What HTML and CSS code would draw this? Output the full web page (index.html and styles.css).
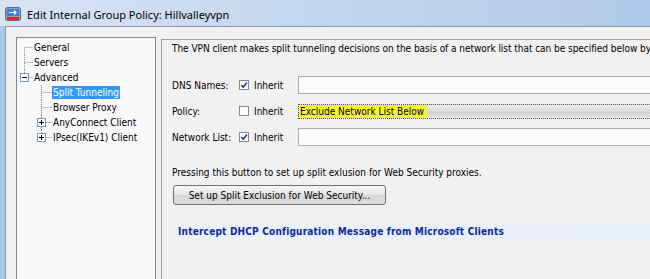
FILE: index.html
```html
<!DOCTYPE html>
<html lang="en">
<head>
  <meta charset="UTF-8" />
  <title>Edit Internal Group Policy: Hillvalleyvpn</title>
  <link rel="stylesheet" href="styles.css">
</head>
<body>

  <div class="window">

    <div class="titlebar">
      <svg class="app-icon" width="16" height="15" viewBox="0 0 16 15">
        <rect x="0.5" y="0.5" width="15" height="13" rx="2" fill="#8fa3bd" stroke="#5b6f8c"/>
        <rect x="2" y="2" width="12" height="7" fill="#3d7fd6"/>
        <path d="M4 5.5h7M9 3.5l2 2-2 2" stroke="#fff" stroke-width="1.2" fill="none"/>
        <rect x="2" y="10" width="12" height="3" fill="#e0262b"/>
      </svg>
      <span class="title">Edit Internal Group Policy: Hillvalleyvpn</span>
    </div>

    <div class="client">

      <div class="tree">
        <div class="node">
          <svg class="gutter g0" viewBox="0 0 16 15"><path d="M7.5 7.5V15M7.5 7.5H16" /></svg>
          <span class="label">General</span>
        </div>
        <div class="node">
          <svg class="gutter g0" viewBox="0 0 16 15"><path d="M7.5 0V15M7.5 7.5H16" /></svg>
          <span class="label">Servers</span>
        </div>
        <div class="node">
          <svg class="gutter g0" viewBox="0 0 16 15">
            <path d="M7.5 0V3M11.5 7.5H16" />
            <rect class="box" x="3.5" y="3.5" width="8" height="8"/>
            <path class="sign" d="M5 7.5h5"/>
          </svg>
          <span class="label">Advanced</span>
        </div>
        <div class="node">
          <svg class="gutter g1" viewBox="0 0 35 15"><path d="M24.5 0V15M24.5 7.5H35" /></svg>
          <span class="label selected">Split Tunneling</span>
        </div>
        <div class="node">
          <svg class="gutter g1" viewBox="0 0 35 15"><path d="M24.5 0V15M24.5 7.5H35" /></svg>
          <span class="label">Browser Proxy</span>
        </div>
        <div class="node">
          <svg class="gutter g1" viewBox="0 0 35 15">
            <path d="M24.5 0V3M24.5 12V15M28.5 7.5H35" />
            <rect class="box" x="20.5" y="3.5" width="8" height="8"/>
            <path class="sign" d="M22 7.5h5M24.5 5v5"/>
          </svg>
          <span class="label">AnyConnect Client</span>
        </div>
        <div class="node">
          <svg class="gutter g1" viewBox="0 0 35 15">
            <path d="M24.5 0V3M28.5 7.5H35" />
            <rect class="box" x="20.5" y="3.5" width="8" height="8"/>
            <path class="sign" d="M22 7.5h5M24.5 5v5"/>
          </svg>
          <span class="label">IPsec(IKEv1) Client</span>
        </div>
      </div>

      <div class="main">
        <p class="intro">The VPN client makes split tunneling decisions on the basis of a network list that can be specified below by</p>

        <div class="form-rows">
          <div class="form-row">
            <span class="field-label">DNS Names:</span>
            <label class="inherit">
              <svg class="check" viewBox="0 0 10 10"><rect x="0.5" y="0.5" width="9" height="9"/><path d="M2.3 5l2 2.2 3.6-4.6"/></svg>
              Inherit
            </label>
            <div class="textbox"></div>
          </div>
          <div class="form-row">
            <span class="field-label">Policy:</span>
            <label class="inherit">
              <svg class="check off" viewBox="0 0 10 10"><rect x="0.5" y="0.5" width="9" height="9"/></svg>
              Inherit
            </label>
            <div class="textbox combo"><span class="hilite">Exclude Network List Below</span></div>
          </div>
          <div class="form-row">
            <span class="field-label">Network List:</span>
            <label class="inherit">
              <svg class="check" viewBox="0 0 10 10"><rect x="0.5" y="0.5" width="9" height="9"/><path d="M2.3 5l2 2.2 3.6-4.6"/></svg>
              Inherit
            </label>
            <div class="textbox"></div>
          </div>
        </div>

        <p class="note">Pressing this button to set up split exlusion for Web Security proxies.</p>
        <button class="btn">Set up Split Exclusion for Web Security...</button>

        <div class="section-head">Intercept DHCP Configuration Message from Microsoft Clients</div>
      </div>

    </div>
  </div>

</body>
</html>
```

FILE: styles.css
```css
:root {
  --frame: #a9c8ea;
  --dialog: #f1f1f2;
  --panel: #f9f9f9;
  --line: #a0a0a0;
  --text: #000;
  --link: #0b2aa6;
}

* {
  box-sizing: border-box;
  margin: 0;
  padding: 0;
}

body {
  width: 650px;
  height: 279px;
  overflow: hidden;
  font-family: "DejaVu Sans Condensed", "DejaVu Sans", sans-serif;
  font-size: 10px;
  color: var(--text);
}

.window {
  display: flex;
  flex-direction: column;
  height: 279px;
  background: var(--frame);
}

.titlebar {
  height: 26px;
  display: flex;
  align-items: center;
  gap: 6px;
  padding: 2px 0 0 5px;
  background: linear-gradient(to right, #d7e5f5, #c3d7ee 45%, #b1cae9);
}

.title {
  font-family: "Noto Sans", sans-serif;
  font-size: 11px;
  color: #000;
}

.client {
  flex: 1;
  display: flex;
  margin-left: 5px;
  padding: 10px 0 0 10px;
  background: var(--dialog);
  border-top: 1px solid #8d9bad;
  border-left: 1px solid #8d9bad;
}

/* tree */

.tree {
  width: 140px;
  background: var(--panel);
  border: 1px solid #828790;
  border-bottom: none;
  padding-top: 2px;
}

.node {
  display: flex;
  align-items: center;
  height: 15px;
}

.gutter {
  height: 15px;
  flex: none;
}
.gutter.g0 { width: 16px; }
.gutter.g1 { width: 35px; }

.gutter path {
  stroke: #8f8f8f;
  stroke-width: 1;
  stroke-dasharray: 1 1;
  fill: none;
}

.gutter .box {
  fill: #fff;
  stroke: #7f9db9;
}

.gutter path.sign {
  stroke: #000;
  stroke-dasharray: none;
}

.label {
  padding: 0 1px;
  line-height: 13px;
  white-space: nowrap;
}

.label.selected {
  background: #3399ff;
  color: #fff;
}

/* right side */

.main {
  flex: 1;
  margin: 2px 0 0 5px;
  padding: 3px 0 0 10px;
  border-top: 1px solid var(--line);
  border-left: 1px solid var(--line);
  overflow: hidden;
}

.intro,
.note {
  white-space: nowrap;
  line-height: 12px;
}

.intro {
  letter-spacing: -0.04px;
}

.form-rows {
  display: flex;
  flex-direction: column;
  gap: 8px;
  margin-top: 21px;
}

.form-row {
  display: flex;
  align-items: center;
  height: 18px;
}

.field-label {
  width: 67px;
  flex: none;
}

.inherit {
  width: 59px;
  flex: none;
  display: flex;
  align-items: center;
  gap: 5px;
}

.check {
  width: 10px;
  height: 10px;
}

.check rect {
  fill: #fff;
  stroke: #8a8a8a;
}

.check path {
  stroke: #2338a8;
  stroke-width: 1.6;
  fill: none;
}

.textbox {
  flex: 1;
  height: 18px;
  margin-right: -10px;
  background: #fbfbfb;
  border: 1px solid #abadb3;
  border-right: none;
}

.textbox.combo {
  height: 15px;
  margin-top: 1px;
  border: 1px dotted #555;
  border-right: none;
  background: linear-gradient(#ececec, #d9d9d9 50%, #cfcfcf 51%, #e4e4e4);
  display: flex;
  align-items: center;
}

.hilite {
  background: #f6f62b;
  padding: 0 3px 0 1px;
  line-height: 13px;
  white-space: nowrap;
}

.note {
  margin-top: 21px;
}

.btn {
  display: block;
  margin: 6px 0 0 1px;
  width: 213px;
  height: 20px;
  font: inherit;
  color: #000;
  background: linear-gradient(#f6f6f6, #e6e6e6 50%, #d8d8d8 51%, #dcdcdc);
  border: 1px solid #707070;
  border-radius: 3px;
}

.section-head {
  margin-top: 19px;
  padding-left: 6px;
  height: 16px;
  line-height: 16px;
  font-weight: bold;
  letter-spacing: 0.2px;
  color: var(--link);
  background: linear-gradient(to right, #eef2f8, #e8eef8);
  white-space: nowrap;
}
```
